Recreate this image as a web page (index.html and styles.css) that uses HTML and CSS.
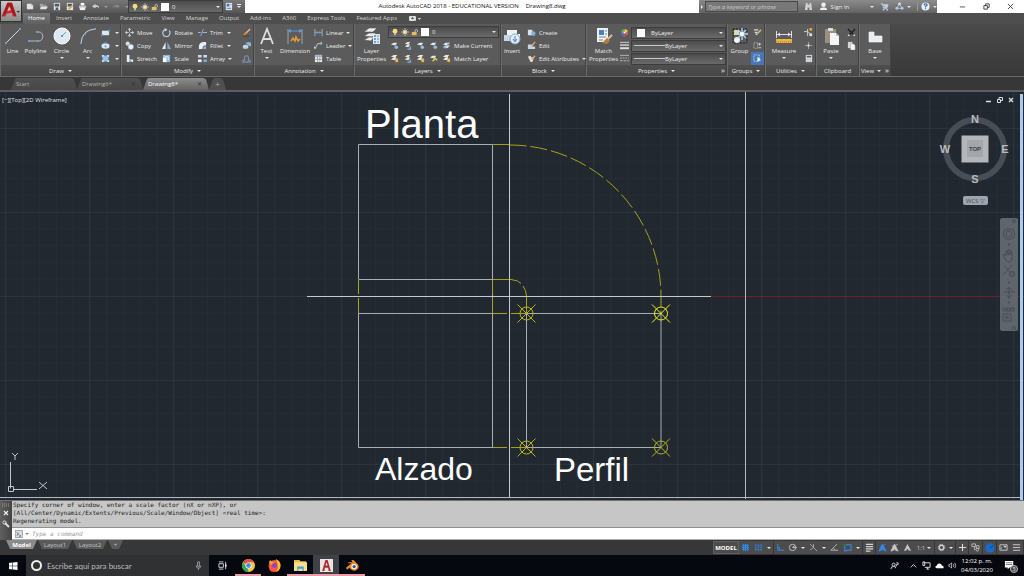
FILE: index.html
```html
<!DOCTYPE html>
<html lang="en">
<head>
<meta charset="utf-8">
<title>Autodesk AutoCAD 2018 - Drawing8.dwg</title>
<link rel="stylesheet" href="styles.css">
</head>
<body>
<svg class="sprite" aria-hidden="true">
  <defs>
    <symbol id="new" viewBox="0 0 10 10"><path d="M1 2h5l2 2v4H1z" fill="#e4e4e4"/><path d="M6 2v2h2" fill="#aaa"/></symbol>
    <symbol id="open" viewBox="0 0 10 10"><path d="M1 2h3l1 1h3v2H1z" fill="#9ba4aa"/><path d="M2 5h8L8 8H1z" fill="#e2e2e2"/></symbol>
    <symbol id="save" viewBox="0 0 10 10"><path d="M2 1h7v8H2z" fill="#dfe5e9"/><path d="M3 2h5v3H3zM4 6h3v3H4z" fill="#4c5963"/></symbol>
    <symbol id="saveas" viewBox="0 0 10 10"><path d="M2 1h7v8H2z" fill="#dfe5e9"/><path d="M3 2h5v3H3z" fill="#4c5963"/><path d="M4 8l4-4" stroke="#e29b36" stroke-width="2"/></symbol>
    <symbol id="print" viewBox="0 0 10 10"><path d="M3 1h4v3H3z" fill="#fff"/><path d="M1 4h8v3H1z" fill="#b9bdc0"/><path d="M2 6h6v3H2z" fill="#f2f2f2"/></symbol>
    <symbol id="undo" viewBox="0 0 10 10"><path d="M5 2L1 5l4 2V6c2-1 3 0 4 1 0-3-2-4-4-3z" fill="#c6d0da"/></symbol>
    <symbol id="redo" viewBox="0 0 10 10"><path d="M5 2l4 3-4 2V6C3 5 2 6 1 7c0-3 2-4 4-3z" fill="#858585"/></symbol>
    <symbol id="bulb" viewBox="0 0 10 10"><circle cx="5" cy="4" r="3" fill="#f8dc7a"/><path d="M4 6h2v3H4z" fill="#d8d0ba"/></symbol>
    <symbol id="sun" viewBox="0 0 10 10"><path d="M5 0v10M0 5h10M2 2l6 6M8 2L2 8" stroke="#e2cfa6"/><circle cx="5" cy="5" r="2.3" fill="#f7e4b0"/></symbol>
    <symbol id="lock" viewBox="0 0 10 10"><path d="M5 5V3q2-3 3 0v2" fill="none" stroke="#ddd"/><path d="M1 5h6v4H1z" fill="#e5bd62"/></symbol>
    <symbol id="sheet" viewBox="0 0 10 10"><path d="M2 1h7v8H2z" fill="#d9e8f4"/><path d="M3 2h3v3H3z" fill="#3c78b4"/><path d="M3 7h5M7 3h1" stroke="#607080"/></symbol>
    <symbol id="binoc" viewBox="0 0 10 10"><path d="M2 1h2v2h2V1h2l1 8H6V6H4v3H1z" fill="#cfd3d6"/></symbol>
    <symbol id="user" viewBox="0 0 10 10"><circle cx="5" cy="3" r="2.5" fill="#eee"/><path d="M1 9q0-3 3-3h2q3 0 3 3z" fill="#eee"/></symbol>
    <symbol id="cart" viewBox="0 0 10 10"><path d="M1 2h2l1 5h4M3 3h6L8 6H4" fill="#bcd0e4" stroke="#bcd0e4"/><circle cx="4" cy="8.5" r="1" fill="#bcd0e4"/><circle cx="8" cy="8.5" r="1" fill="#bcd0e4"/></symbol>
    <symbol id="a360" viewBox="0 0 10 10"><path d="M5 2L2 7h6z" fill="none" stroke="#b2cce8"/><circle cx="5" cy="2" r="1.5" fill="#d6e5f5"/><circle cx="2" cy="7" r="1.5" fill="#b2cce8"/><circle cx="8" cy="7" r="1.5" fill="#b2cce8"/></symbol>
    <symbol id="help" viewBox="0 0 10 10"><circle cx="5" cy="5" r="4.5" fill="#e8f0f8"/><path d="M3.5 4q0-2 1.700-2t1.500 1.500L5 5v1M5 7v1" fill="none" stroke="#2f68ad" stroke-width="1.300"/></symbol>

    <symbol id="line" viewBox="0 0 18 18"><path d="M2 16L16 2" stroke="#d5dadd"/><path d="M1 15h2v2H1zM15 1h2v2h-2z" fill="#6f9cd0"/></symbol>
    <symbol id="poly" viewBox="0 0 18 18"><path d="M2 14h10c5 0 5-9 0-9h-2" fill="none" stroke="#a9bccf"/><path d="M1 13h2v2H1zM10 13h2v2h-2zM9 4h2v2H9z" fill="#6f9cd0"/></symbol>
    <symbol id="circle" viewBox="0 0 18 18"><circle cx="9" cy="9" r="8" fill="#dce8f2" stroke="#fff"/><path d="M9 9l4-4" stroke="#6b9acb"/><circle cx="9" cy="9" r="1" fill="#4e83bf"/></symbol>
    <symbol id="arc" viewBox="0 0 18 18"><path d="M2 16Q3 3 16 2" fill="none" stroke="#c8d2da"/><path d="M1 15h2v2H1zM5 6h2v2H5zM15 1h2v2h-2z" fill="#6f9cd0"/></symbol>
    <symbol id="rect" viewBox="0 0 10 10"><path d="M1 3h8v5H1z" fill="#dbe9f5"/><path d="M0 7h2v2H0zM8 2h2v2H8z" fill="#5c95d4"/></symbol>
    <symbol id="ellipse" viewBox="0 0 10 10"><ellipse cx="5" cy="5.500" rx="4.500" ry="3" fill="#dbe9f5"/><path d="M4 5h2v2H4zM4 1h2v2H4z" fill="#5c95d4"/></symbol>
    <symbol id="hatch" viewBox="0 0 10 10"><path d="M2 2h6v6H2z" fill="#9dc3e8" stroke="#6ca0d8"/><path d="M1 1h2v2H1zM7 1h2v2H7zM1 7h2v2H1zM7 7h2v2H7z" fill="#d8e8f8"/></symbol>
    <symbol id="move" viewBox="0 0 10 10"><path d="M5 0l2 2H3zM5 10L3 8h4zM0 5l2-2v4zM10 5L8 7V3z" fill="#d9e2ea"/><path d="M5 2v2M5 6v2M2 5h2M6 5h2" stroke="#d9e2ea"/></symbol>
    <symbol id="copy" viewBox="0 0 10 10"><circle cx="3" cy="3" r="2.400" fill="#cfdbe5"/><circle cx="6.500" cy="6.500" r="3" fill="#e9f1f8" stroke="#87aaca" stroke-width=".5"/></symbol>
    <symbol id="stretch" viewBox="0 0 10 10"><path d="M2 1h3v5h4v3H2z" fill="#e7eef4"/><path d="M5 6l3 3H5z" fill="#6c9fcf"/></symbol>
    <symbol id="rotate" viewBox="0 0 10 10"><path d="M3 2a4 4 0 1 0 5 1" fill="none" stroke="#b9cfe4" stroke-width="1.300"/><path d="M3 0l3 2-3 2z" fill="#d9e2ea"/></symbol>
    <symbol id="mirror" viewBox="0 0 10 10"><path d="M4 1v8H0z" fill="#dfe7ee"/><path d="M6 1v8h4z" fill="#7ea9d2"/></symbol>
    <symbol id="scale" viewBox="0 0 10 10"><path d="M1 1h8v8H1z" fill="#8db6dc"/><path d="M1 4h4v5H1z" fill="#fff"/><path d="M3 3h4v4" fill="none" stroke="#e8f1f9"/></symbol>
    <symbol id="trim" viewBox="0 0 10 10"><path d="M0 5h3M5 5h5" stroke="#a8c4df"/><path d="M3 9l3-8" stroke="#86b3df"/></symbol>
    <symbol id="fillet" viewBox="0 0 10 10"><path d="M1 9V6q0-5 6-5h2v4H7q-2 0-2 4z" fill="#e8eff5"/><path d="M6 6h3v3H6z" fill="#86b3df"/></symbol>
    <symbol id="array" viewBox="0 0 10 10"><path d="M0 1h4v3H0zM6 1h4v3H6z" fill="#c9dff3"/><path d="M0 6h4v3H0z" fill="#ecf4fb"/><path d="M6 6h4v3H6z" fill="#76a9dc"/></symbol>
    <symbol id="erase" viewBox="0 0 10 10"><path d="M9 1L4 6" stroke="#f1c073" stroke-width="1.500"/><path d="M5 5L2 8" stroke="#d88a31" stroke-width="2"/><path d="M1 9h7" stroke="#3c3c3c"/></symbol>
    <symbol id="explode" viewBox="0 0 10 10"><path d="M1 5l3-1 3 1v3L4 9 1 8z" fill="#bfd3e6"/><path d="M4 2l3-1 3 1v4L7 5z" fill="#8fb4d7"/></symbol>
    <symbol id="offset" viewBox="0 0 10 10"><path d="M1 9V7h2q-1-5 2-5t2 5h2v2z" fill="none" stroke="#7794b0" stroke-width="1.200"/></symbol>
    <symbol id="text" viewBox="0 0 18 18"><path d="M3 17L9 2l6 15M5 12h8" fill="none" stroke="#dedede" stroke-width="1.800"/></symbol>
    <symbol id="dim" viewBox="0 0 18 18"><path d="M2 2v15M16 2v15" stroke="#9aa7b3"/><path d="M2 4h14" stroke="#5b9be0"/><path d="M2 4l3-2v4zM16 4l-3-2v4z" fill="#5b9be0"/><path d="M5 14l2-3 2 3 1-4 2 4 2-2" fill="none" stroke="#e99b36" stroke-width="1.500"/></symbol>
    <symbol id="linear" viewBox="0 0 10 10"><path d="M1 1v8M9 1v8" stroke="#a9b3bc"/><path d="M1 5h8M2 5l2-1v2zM8 5L6 4v2z" stroke="#6ca0d8"/></symbol>
    <symbol id="leader" viewBox="0 0 10 10"><path d="M1 9l3-6h5" fill="none" stroke="#cfd5da"/><path d="M0 9V6l2 1z" fill="#cfd5da"/><path d="M7 1h2v3H7z" fill="#8cb4dc"/></symbol>
    <symbol id="table" viewBox="0 0 10 10"><path d="M1 1h8v8H1z" fill="#f0f0f0"/><path d="M1 3h8M1 6h8M4 3v6M6.500 3v6" stroke="#777" stroke-width=".7"/><path d="M1 1h8v1H1z" fill="#7fb0de"/></symbol>
    <symbol id="layers" viewBox="0 0 18 18"><path d="M1 5l5-4h8l-4 4zM1 9l5-3h7l-4 4zM1 13l5-3h5l-3 4z" fill="#eeeeea" stroke="#555" stroke-width=".6"/><path d="M10 7h7v10h-7z" fill="#dce9f4"/><path d="M11 9h2M11 12h2M11 15h2" stroke="#4d88c5" stroke-width="1.500"/><path d="M14 9h2M14 12h2M14 15h2" stroke="#808890"/></symbol>
    <symbol id="l1" viewBox="0 0 10 10"><path d="M1 4l3-2h4L6 5z" fill="#e6e6e3"/><circle cx="7" cy="7" r="2" fill="#8dbbe8"/></symbol>
    <symbol id="l2" viewBox="0 0 10 10"><path d="M2 3l3-2h3L6 4zM2 6l3-2h3L6 7z" fill="#e6e6e3"/><path d="M5 9h4M8 6v3" stroke="#83b4e8" stroke-width="1.300"/></symbol>
    <symbol id="l3" viewBox="0 0 10 10"><path d="M1 3l3-2h4L6 4zM1 6l3-2h3L6 7z" fill="#eceae4"/><path d="M6 5h3v4H6z" fill="#eeb64b"/></symbol>
    <symbol id="l4" viewBox="0 0 10 10"><path d="M1 4l3-2h4L6 5z" fill="#e6e6e3"/><path d="M4 8l3-3 2 2" fill="none" stroke="#e4d353" stroke-width="1.500"/></symbol>
    <symbol id="l5" viewBox="0 0 10 10"><path d="M1 4l3-2h5L6 5zM1 7l3-2h5L6 8z" fill="#d9e8f5"/><path d="M3 9l5-8" stroke="#75a6da"/></symbol>
    <symbol id="insert" viewBox="0 0 18 18"><path d="M4 3h10v4h3v5H4z" fill="#f0f3f5"/><path d="M1 8h7v6H1z" fill="#c8d6e3"/><circle cx="12" cy="12" r="5" fill="#e4eef7" stroke="#83a9cf"/><path d="M12 9v5M10 12l2 3 2-3" stroke="#4b84bd" fill="none"/></symbol>
    <symbol id="create" viewBox="0 0 10 10"><path d="M1 2h5v3h3v3H1z" fill="#d6e2ed"/><circle cx="7" cy="6" r="2.300" fill="#86b1db"/></symbol>
    <symbol id="edit" viewBox="0 0 10 10"><path d="M1 4h5v2h3v3H1z" fill="#c4d5e5"/><path d="M5 6l4-5" stroke="#eda743" stroke-width="1.600"/></symbol>
    <symbol id="attr" viewBox="0 0 10 10"><path d="M1 3l3-1 1 2 3-1-2 6H4z" fill="#dce0e3"/><path d="M5 6l4-4" stroke="#eda743" stroke-width="1.500"/></symbol>
    <symbol id="match" viewBox="0 0 18 18"><path d="M2 1h11v14H2z" fill="#edf1f4"/><path d="M4 3h5v5H4z" fill="#4a82bf"/><path d="M10 4h2M10 7h2M4 10h7M4 13h4" stroke="#78838c"/><path d="M17 8l-5 5" stroke="#d4bfa3" stroke-width="2"/><path d="M12 11l3 3-3 3-5-1z" fill="#b9783e"/></symbol>
    <symbol id="wheel" viewBox="0 0 10 10"><path d="M5 5V1a4 4 0 0 1 4 3z" fill="#f1c83f"/><path d="M5 5l4-1a4 4 0 0 1-2 4z" fill="#e26a35"/><path d="M5 5l2 4a4 4 0 0 1-5-1z" fill="#b04a8f"/><path d="M5 5L2 8a4 4 0 0 1-1-4z" fill="#4c79c9"/><path d="M5 5L1 4a4 4 0 0 1 4-3z" fill="#5fae57"/><circle cx="5" cy="5" r="1.200" fill="#fff"/></symbol>
    <symbol id="weight" viewBox="0 0 10 10"><path d="M0 1.500h10" stroke="#ddd"/><path d="M0 4.500h10" stroke="#ddd" stroke-width="1.500"/><path d="M0 8h10" stroke="#ddd" stroke-width="2.200"/></symbol>
    <symbol id="ltype" viewBox="0 0 10 10"><path d="M0 1.500h10" stroke="#bbb"/><path d="M0 4.500h10" stroke="#bbb" stroke-dasharray="2 1"/><path d="M0 7.500h10" stroke="#bbb" stroke-dasharray="3 1"/></symbol>
    <symbol id="group" viewBox="0 0 18 18"><path d="M2 2h14v14H2z" fill="none" stroke="#222" stroke-dasharray="2 1"/><path d="M3 3h5v5H3z" fill="#e4d99c"/><circle cx="6" cy="13" r="3" fill="#f2f2f2"/><path d="M11 1v12M5 7h12M7 3l8 8M15 3l-8 8" stroke="#bbdcf6" stroke-width="1.300"/><circle cx="11" cy="7" r="2" fill="#fff"/></symbol>
    <symbol id="g1" viewBox="0 0 10 10"><path d="M1 2h5M2 5h3M3 7h2" stroke="#d9d9d9" stroke-width="1.500"/><path d="M5 6l4-4" stroke="#e0c15b" stroke-width="1.500"/></symbol>
    <symbol id="g2" viewBox="0 0 10 10"><path d="M1 2h4v6H1z" fill="none" stroke="#ccc" stroke-dasharray="1 1"/><path d="M7 2v3M6 3.500h3M6 7.500h3" stroke="#ddd"/></symbol>
    <symbol id="g3" viewBox="0 0 10 10"><path d="M1 1h6v7H1z" fill="none" stroke="#e4eefb" stroke-dasharray="1 1"/><path d="M5 3v6l2-2h2z" fill="#fff"/></symbol>
    <symbol id="measure" viewBox="0 0 18 18"><path d="M1.500 4v7M16.500 4v7M2 7.500h14" stroke="#d8dfe5"/><path d="M2 7.500l3-2v4zM16 7.500l-3-2v4z" fill="#d8dfe5"/><path d="M1 12h16v4H1z" fill="#ecb33f"/><path d="M1 15h16" stroke="#b57919" stroke-dasharray="1 1"/></symbol>
    <symbol id="u1" viewBox="0 0 10 10"><path d="M0 4h4M4 1v8M4 4l5 4" stroke="#ccd6de"/><path d="M6 0h3v3H6z" fill="#eb9e35"/><path d="M6 6h3v3H6z" fill="#ddd"/></symbol>
    <symbol id="u2" viewBox="0 0 10 10"><path d="M5 1v8M1 5h8" stroke="#9aaaba"/><path d="M4 4h2v2H4z" fill="#e8f0f6"/></symbol>
    <symbol id="calc" viewBox="0 0 10 10"><path d="M2 1h7v8H2z" fill="#e1e4e6"/><path d="M3 2h5v2H3z" fill="#56616b"/><path d="M3 6h5M3 8h5" stroke="#8b949b" stroke-dasharray="1 1"/></symbol>
    <symbol id="paste" viewBox="0 0 18 18"><path d="M3 2h11v14H3z" fill="#9c8f80"/><path d="M6 1h5v3H6z" fill="#ddd"/><path d="M8 6h6l3 3v9H8z" fill="#f4f4f4"/><path d="M14 6v3h3" fill="#bbb"/></symbol>
    <symbol id="cut" viewBox="0 0 10 10"><path d="M1 1l7 7M9 1L2 8" stroke="#222" stroke-width="1.600"/><path d="M1 8h2M7 8h2" stroke="#ddd" stroke-width="1.500"/></symbol>
    <symbol id="clip" viewBox="0 0 10 10"><path d="M1 1h5v7H1z" fill="#d6d6d6"/><path d="M4 3h3l2 2v5H4z" fill="#f5f5f5" stroke="#888" stroke-width=".4"/></symbol>
    <symbol id="base" viewBox="0 0 18 18"><path d="M3 5h5v4h8v6H3z" fill="#e9edf0" stroke="#fff" stroke-width=".6"/></symbol>

    <symbol id="grid" viewBox="0 0 10 10"><path d="M3 1v8M5 1v8M7 1v8M1 3h8M1 5h8M1 7h8" stroke="#2f8cf0" stroke-width="1.100"/></symbol>
    <symbol id="snap" viewBox="0 0 10 10"><path d="M1 2.500h8M1 5h8M1 7.500h8" stroke="#2f7fd8" stroke-width="1.500" stroke-dasharray="2 1"/></symbol>
    <symbol id="ortho" viewBox="0 0 10 10"><path d="M2 1v7h7M2 5h2v3" fill="none" stroke="#2f8cf0"/></symbol>
    <symbol id="polar" viewBox="0 0 10 10"><circle cx="5" cy="5" r="3.500" fill="none" stroke="#c5c5c5"/><path d="M5 5h5M5 5l3-3" stroke="#c5c5c5"/></symbol>
    <symbol id="iso" viewBox="0 0 10 10"><path d="M1 1l8 8M5 5V1M5 5L1 8" stroke="#aaa"/></symbol>
    <symbol id="track" viewBox="0 0 10 10"><path d="M8 1L1 8h8M4 6l2 2" fill="none" stroke="#bbb"/></symbol>
    <symbol id="osnap" viewBox="0 0 10 10"><path d="M3 2h6v6H6L2 9V3" fill="none" stroke="#2f8cf0" stroke-width="1.200"/><circle cx="2" cy="2" r="1.800" fill="#20803a"/></symbol>
    <symbol id="lwt" viewBox="0 0 10 10"><path d="M1 1.500h8M1 4h8M1 6.500h8M1 9h5" stroke="#d2d2d2" stroke-width="1.300"/></symbol>
    <symbol id="anno" viewBox="0 0 10 10"><path d="M5 1L1 9l3-1 1-2 1 2 3 1z" fill="currentColor"/></symbol>
    <symbol id="annox" viewBox="0 0 10 10"><path d="M5 1L1 9l3-1 1-2 1 2 3 1zM2 3l4 3M9 1L5 4" fill="currentColor" stroke="currentColor" stroke-width=".8"/></symbol>
    <symbol id="gear" viewBox="0 0 10 10"><circle cx="5" cy="5" r="2.500" fill="none" stroke="#ccc" stroke-width="1.500"/><circle cx="5" cy="5" r="3.600" fill="none" stroke="#ccc" stroke-dasharray="1.400 1.400"/></symbol>
    <symbol id="plus" viewBox="0 0 10 10"><path d="M5 1v8M1 5h8" stroke="#ddd" stroke-width="1.200"/></symbol>
    <symbol id="isolate" viewBox="0 0 10 10"><path d="M1 1h4v3H1zM4 4v4M6 3h3v3H6z" fill="none" stroke="#bbb"/><circle cx="7" cy="7.500" r="1.500" fill="none" stroke="#bbb"/></symbol>
    <symbol id="perf" viewBox="0 0 10 10"><circle cx="5" cy="5" r="4.700" fill="#176bcb"/><path d="M5 5l3-2" stroke="#0b3d7d"/></symbol>
    <symbol id="clean" viewBox="0 0 10 10"><path d="M1 2h8v6H1z" fill="none" stroke="#ccc"/><path d="M5 3h3v2H6zM2 7V5h2z" fill="#ccc"/></symbol>
    <symbol id="burger" viewBox="0 0 10 10"><path d="M1 2h8M1 5h8M1 8h8" stroke="#c5c5c5" stroke-width="1.200"/></symbol>

    <symbol id="windows" viewBox="0 0 10 10"><path d="M1 2l3.500-.5v3.300H1zM5 1.400L9.500 1v3.800H5zM1 5.300h3.500v3.300L1 8zM5 5.300h4.500V9L5 8.600z" fill="#fff"/></symbol>
    <symbol id="mic" viewBox="0 0 10 10"><path d="M4 1h2v5H4zM2.500 5q0 3 2.500 3t2.500-3M5 8v2" fill="none" stroke="#bbb" stroke-width=".8"/></symbol>
    <symbol id="taskview" viewBox="0 0 10 10"><path d="M1 3h5v4H1zM1 1h5M1 9h5M8.500 1v8" fill="none" stroke="#ddd"/><path d="M8 4h1.500v2H8z" fill="#fff"/></symbol>
    <symbol id="chrome" viewBox="0 0 12 12"><circle cx="6" cy="6" r="6" fill="#f6c944"/><path d="M6 6L.8 3A6 6 0 0 1 11.200 3H6z" fill="#de5145"/><path d="M.8 3l4.200 5L6 12A6 6 0 0 1 .8 3z" fill="#2fa35a"/><circle cx="6" cy="6" r="2.800" fill="#fff"/><circle cx="6" cy="6" r="2.200" fill="#4a8af0"/></symbol>
    <symbol id="firefox" viewBox="0 0 12 12"><circle cx="6" cy="6.500" r="5.500" fill="#ff5a36"/><path d="M7 0q5 2 4.500 6.500Q11 11 7 12q3-3 2-6Q9 3 7 0z" fill="#ffc42c"/><path d="M1 4q0-2 1-3l2 2h2L4 6z" fill="#ff9a2c"/><path d="M1 8q2 4 6 4-5 1-6-4z" fill="#f0308a"/><circle cx="6" cy="6" r="2.300" fill="#8046d6"/></symbol>
    <symbol id="folder" viewBox="0 0 12 12"><path d="M0 1h5l1 1h5v9H0z" fill="#e9b84a"/><path d="M0 3h12v8H0z" fill="#fbe08a"/><path d="M3 11V7h6v4H8V9H4v2z" fill="#3c9fe0"/></symbol>
    <symbol id="acad" viewBox="0 0 12 12"><path d="M0 0h12v12H0z" fill="#eee4de"/><path d="M2 11L5 1h2l3 10H8L7.500 8h-3L4 11z" fill="#a92a2d"/><path d="M5 6h2L6 3z" fill="#eee4de"/></symbol>
    <symbol id="blender" viewBox="0 0 12 12"><path d="M0 8l5-4H2V3h4L5 1h2l4 4q2 3-1 5-3 2-6-1L3 8 1 10z" fill="#ea8b24"/><circle cx="7.500" cy="7" r="2.500" fill="#fff"/><circle cx="7.500" cy="7" r="1.500" fill="#235b94"/></symbol>
    <symbol id="people" viewBox="0 0 10 10"><circle cx="4" cy="4" r="1.700" fill="none" stroke="#ddd"/><path d="M1 9q0-3 3-3t2 2M7 2h2v2H7v2" fill="none" stroke="#ddd"/></symbol>
    <symbol id="chev" viewBox="0 0 10 10"><path d="M2 7l3-3 3 3" fill="none" stroke="#eee"/></symbol>
    <symbol id="net" viewBox="0 0 10 10"><path d="M2 2h7v5H3M5 9h3M6 7v2M1 1v4h2V1z" fill="none" stroke="#e5e5e5"/></symbol>
    <symbol id="cloud" viewBox="0 0 10 10"><path d="M2 8q-2 0-1.500-2L2 5q1-3 4-2 1 0 1.500 2Q10 5 9.500 8z" fill="#fff"/></symbol>
    <symbol id="volume" viewBox="0 0 10 10"><path d="M1 4h1l2-2v6L2 6H1zM6 3.500q1 1.500 0 3M7.500 2q2 3 0 6" fill="none" stroke="#e5e5e5" stroke-width=".8"/></symbol>
    <symbol id="marker" viewBox="-10 -10 20 20"><circle r="6.500" fill="none" stroke="currentColor"/><path d="M-9-9L9 9M9-9L-9 9" stroke="currentColor"/></symbol>
  </defs>
</svg>

<div class="app">
  <header class="titlebar">
    <button class="app-menu" aria-label="Application menu">
      <svg class="app-logo" viewBox="0 0 22 20"><path d="M1 16L7 1h5l5 15h-4l-1-4-6 1-1 3z" fill="#cf2a2d"/><path d="M7 1l5 0 5 15-3-1L9 4 5 13l-4 3z" fill="#a41a1e"/><path d="M7 10l2-5 2 4z" fill="#c8c8c8"/><path d="M17 10h4l-2 2z" fill="#333"/></svg>
    </button>
    <div class="quick">
      <button aria-label="New"><svg><use href="#new"/></svg></button>
      <button aria-label="Open"><svg><use href="#open"/></svg></button>
      <button aria-label="Save"><svg><use href="#save"/></svg></button>
      <button aria-label="Save as"><svg><use href="#saveas"/></svg></button>
      <button aria-label="Plot"><svg><use href="#print"/></svg></button>
      <button aria-label="Undo"><svg><use href="#undo"/></svg></button><i class="caret dim"></i>
      <button aria-label="Redo"><svg><use href="#redo"/></svg></button><i class="caret dim"></i>
    </div>
    <div class="combo quick-layer">
      <svg><use href="#bulb"/></svg><svg><use href="#sun"/></svg><svg><use href="#lock"/></svg><i class="swatch"></i>
      <select aria-label="Current layer"><option>0</option></select><i class="caret"></i>
    </div>
    <div class="quick-end">
      <button aria-label="Sheet set"><svg><use href="#sheet"/></svg></button>
      <button class="more" aria-label="Customize toolbar"><i class="caret"></i></button>
    </div>
    <div class="title"><span>Autodesk AutoCAD 2018 - EDUCATIONAL VERSION</span><span>Drawing8.dwg</span></div>
    <div class="info">
      <button class="info-arrow" aria-label="Collapse search"><i class="caret right"></i></button>
      <input class="info-search" type="text" placeholder="Type a keyword or phrase" aria-label="Search help">
      <button aria-label="Search"><svg><use href="#binoc"/></svg></button>
      <button class="signin"><svg><use href="#user"/></svg><span>Sign In</span><i class="caret"></i></button>
      <button aria-label="Store"><svg><use href="#cart"/></svg></button>
      <button aria-label="A360"><svg><use href="#a360"/></svg><i class="caret"></i></button>
      <button class="help" aria-label="Help"><svg><use href="#help"/></svg><i class="caret"></i></button>
    </div>
    <div class="window-buttons">
      <button aria-label="Minimize"><svg viewBox="0 0 8 8"><path d="M1 4.500h6" stroke="#444"/></svg></button>
      <button aria-label="Restore"><svg viewBox="0 0 8 8"><path d="M1 3h4v4H1zM3 3V1h4v4H5" fill="none" stroke="#333"/></svg></button>
      <button aria-label="Close"><svg viewBox="0 0 8 8"><path d="M1 1l6 6M7 1L1 7" stroke="#444"/></svg></button>
    </div>
  </header>

  <nav class="menu">
    <button class="active">Home</button><button>Insert</button><button>Annotate</button><button>Parametric</button><button>View</button><button>Manage</button><button>Output</button><button>Add-ins</button><button>A360</button><button>Express Tools</button><button>Featured Apps</button>
    <button class="menu-cycle" aria-label="Minimize ribbon"><svg viewBox="0 0 14 6"><rect x="1" width="7" height="5" rx="1" fill="#ddd"/><path d="M3 3h3L4.500 1z" fill="#444"/><path d="M10 2h3l-1.500 2z" fill="#ddd"/></svg></button>
  </nav>

  <main class="ribbon">
    <section class="panel p-draw">
      <div class="panel-body">
        <button class="big"><svg><use href="#line"/></svg>Line</button>
        <button class="big"><svg><use href="#poly"/></svg>Polyline</button>
        <button class="big wide"><svg><use href="#circle"/></svg>Circle<i class="caret"></i></button>
        <button class="big"><svg><use href="#arc"/></svg>Arc<i class="caret"></i></button>
        <div class="col">
          <button class="tool" aria-label="Rectangle"><svg><use href="#rect"/></svg><i class="caret"></i></button>
          <button class="tool" aria-label="Ellipse"><svg><use href="#ellipse"/></svg><i class="caret"></i></button>
          <button class="tool" aria-label="Hatch"><svg><use href="#hatch"/></svg><i class="caret"></i></button>
        </div>
      </div>
      <button class="panel-title">Draw<i class="caret"></i></button>
    </section>

    <section class="panel p-modify">
      <div class="panel-body">
        <div class="col c1">
          <button class="tool"><svg><use href="#move"/></svg>Move</button>
          <button class="tool"><svg><use href="#copy"/></svg>Copy</button>
          <button class="tool"><svg><use href="#stretch"/></svg>Stretch</button>
        </div>
        <div class="col c2">
          <button class="tool"><svg><use href="#rotate"/></svg>Rotate</button>
          <button class="tool"><svg><use href="#mirror"/></svg>Mirror</button>
          <button class="tool"><svg><use href="#scale"/></svg>Scale</button>
        </div>
        <div class="col c3">
          <button class="tool"><svg><use href="#trim"/></svg>Trim<i class="caret end"></i></button>
          <button class="tool"><svg><use href="#fillet"/></svg>Fillet<i class="caret end"></i></button>
          <button class="tool"><svg><use href="#array"/></svg>Array<i class="caret end"></i></button>
        </div>
        <div class="col">
          <button class="tool" aria-label="Erase"><svg><use href="#erase"/></svg></button>
          <button class="tool" aria-label="Explode"><svg><use href="#explode"/></svg></button>
          <button class="tool" aria-label="Offset"><svg><use href="#offset"/></svg></button>
        </div>
      </div>
      <button class="panel-title">Modify<i class="caret"></i></button>
    </section>

    <section class="panel p-annotation">
      <div class="panel-body">
        <button class="big"><svg><use href="#text"/></svg>Text<i class="caret"></i></button>
        <button class="big dimension"><svg><use href="#dim"/></svg>Dimension</button>
        <div class="col">
          <button class="tool"><svg><use href="#linear"/></svg>Linear<i class="caret end"></i></button>
          <button class="tool"><svg><use href="#leader"/></svg>Leader<i class="caret end"></i></button>
          <button class="tool"><svg><use href="#table"/></svg>Table</button>
        </div>
      </div>
      <button class="panel-title">Annotation<i class="caret"></i></button>
    </section>

    <section class="panel p-layers">
      <div class="panel-body">
        <button class="big props"><svg><use href="#layers"/></svg>Layer<br>Properties</button>
        <div class="col grow">
          <div class="combo">
            <svg><use href="#bulb"/></svg><svg><use href="#sun"/></svg><svg><use href="#lock"/></svg><i class="swatch"></i>
            <select aria-label="Layer"><option>0</option></select><i class="caret"></i>
          </div>
          <div class="tool-row">
            <button class="tool" aria-label="Layer off"><svg><use href="#l1"/></svg></button>
            <button class="tool" aria-label="Isolate layer"><svg><use href="#l2"/></svg></button>
            <button class="tool" aria-label="Freeze layer"><svg><use href="#l1"/></svg></button>
            <button class="tool" aria-label="Lock layer"><svg><use href="#l1"/></svg></button>
            <button class="tool"><svg><use href="#l5"/></svg>Make Current</button>
          </div>
          <div class="tool-row">
            <button class="tool" aria-label="All layers on"><svg><use href="#l3"/></svg></button>
            <button class="tool" aria-label="Unisolate layer"><svg><use href="#l2"/></svg></button>
            <button class="tool" aria-label="Thaw all layers"><svg><use href="#l3"/></svg></button>
            <button class="tool" aria-label="Unlock layer"><svg><use href="#l4"/></svg></button>
            <button class="tool"><svg><use href="#l3"/></svg>Match Layer</button>
          </div>
        </div>
      </div>
      <button class="panel-title">Layers<i class="caret"></i></button>
    </section>

    <section class="panel p-block">
      <div class="panel-body">
        <button class="big"><svg><use href="#insert"/></svg>Insert</button>
        <div class="col grow">
          <button class="tool"><svg><use href="#create"/></svg>Create</button>
          <button class="tool"><svg><use href="#edit"/></svg>Edit</button>
          <button class="tool"><svg><use href="#attr"/></svg>Edit Attributes<i class="caret end"></i></button>
        </div>
      </div>
      <button class="panel-title">Block<i class="caret"></i></button>
    </section>

    <section class="panel p-properties">
      <div class="panel-body">
        <button class="big props"><svg><use href="#match"/></svg>Match<br>Properties</button>
        <div class="col grow">
          <div class="prop"><svg><use href="#wheel"/></svg><div class="combo"><i class="swatch"></i><select aria-label="Color"><option>ByLayer</option></select><i class="caret"></i></div></div>
          <div class="prop"><svg><use href="#weight"/></svg><div class="combo"><i class="rule"></i><select aria-label="Lineweight"><option>ByLayer</option></select><i class="caret"></i></div></div>
          <div class="prop"><svg><use href="#ltype"/></svg><div class="combo"><i class="rule"></i><select aria-label="Linetype"><option>ByLayer</option></select><i class="caret"></i></div></div>
        </div>
      </div>
      <button class="panel-title">Properties<i class="caret"></i><span class="launch">»</span></button>
    </section>

    <section class="panel p-groups">
      <div class="panel-body">
        <button class="big"><svg><use href="#group"/></svg>Group</button>
        <div class="col">
          <button class="tool" aria-label="Ungroup"><svg><use href="#g1"/></svg></button>
          <button class="tool" aria-label="Group edit"><svg><use href="#g2"/></svg></button>
          <button class="tool on" aria-label="Group selection"><svg><use href="#g3"/></svg></button>
        </div>
      </div>
      <button class="panel-title">Groups<i class="caret"></i></button>
    </section>

    <section class="panel p-utilities">
      <div class="panel-body">
        <button class="big"><svg><use href="#measure"/></svg>Measure<i class="caret"></i></button>
        <div class="col">
          <button class="tool" aria-label="Quick select"><svg><use href="#u1"/></svg></button>
          <button class="tool" aria-label="Point"><svg><use href="#u2"/></svg></button>
          <button class="tool" aria-label="Calculator"><svg><use href="#calc"/></svg></button>
        </div>
      </div>
      <button class="panel-title">Utilities<i class="caret"></i></button>
    </section>

    <section class="panel p-clipboard">
      <div class="panel-body">
        <button class="big"><svg><use href="#paste"/></svg>Paste<i class="caret"></i></button>
        <div class="col">
          <button class="tool" aria-label="Cut"><svg><use href="#cut"/></svg></button>
          <button class="tool" aria-label="Copy clip"><svg><use href="#clip"/></svg></button>
        </div>
      </div>
      <div class="panel-title">Clipboard</div>
    </section>

    <section class="panel p-view">
      <div class="panel-body">
        <button class="big"><svg><use href="#base"/></svg>Base<i class="caret"></i></button>
      </div>
      <button class="panel-title">View<i class="caret"></i><span class="launch">»</span></button>
    </section>
  </main>

  <nav class="files">
    <button class="file">Start</button>
    <button class="file"><span>Drawing6*</span><span class="x">✕</span></button>
    <button class="file active"><span>Drawing8*</span><span class="x">✕</span></button>
    <button class="file add" aria-label="New drawing">+</button>
  </nav>

  <div class="viewport">
    <svg class="drawing" viewBox="0 92 1024 408" preserveAspectRatio="xMinYMin slice">
      <defs>
        <pattern id="minor" x="5.500" y="43.500" width="16.800" height="16.800" patternUnits="userSpaceOnUse"><path d="M.5 0v16.800M0 .5h16.800" stroke="#252c35"/></pattern>
        <pattern id="major" x="5" y="44" width="84" height="84" patternUnits="userSpaceOnUse"><path d="M.5 0v84M0 .5h84" stroke="#2b333e"/></pattern>
      </defs>
      <rect y="92" width="1024" height="408" fill="#212830"/>
      <rect y="92" width="1024" height="408" fill="url(#minor)"/>
      <rect y="92" width="1024" height="408" fill="url(#major)"/>
      <path d="M711 296.500h309" stroke="#6d2227"/>
      <g fill="none" stroke="#a9abae">
        <path d="M358.500 279V144.500H492.500V447.500M358.500 279.500H493M358.500 313.500H493M358.500 313V447.500H493M526.500 313.500H661M526.500 313V447.500H661V313"/>
      </g>
      <g fill="none" stroke="#a3a31a">
        <path d="M493 144.500h17M493 279.500h18"/>
        <path d="M509.500 145A151.500 151.500 0 0 1 661 296.500V313" stroke-dasharray="17 4"/>
        <path d="M511 279.500q8 1 10 4M523 286q3 4 3.500 10v17"/>
        <path d="M358.500 280v14M358.500 298v15M492.500 280v14M492.500 298v15M493 313.500h14M511 313.500h15M493 447.500h14M511 447.500h15"/>
      </g>
      <path d="M307 296.500h404M509.500 94v404" stroke="#c6c8c9"/>
      <path d="M745.500 92v407M0 497.500h1020" stroke="#b4b9bf"/>
      <g color="#b3b31c">
        <use href="#marker" x="516.500" y="303.500" width="20" height="20"/>
        <use href="#marker" x="516.500" y="437.500" width="20" height="20"/>
        <use href="#marker" x="651" y="437.500" width="20" height="20"/>
        <use href="#marker" x="651" y="303.500" width="20" height="20" color="#f0f01a"/>
      </g>
      <g class="drawing-text">
        <text x="365" y="138" font-size="40">Planta</text>
        <text x="375" y="480" font-size="32">Alzado</text>
        <text x="554" y="481" font-size="33">Perfil</text>
      </g>
      <path d="M10.500 462v26.500M8.500 486.500h5v5h-5zM13 489.500h24M39 482l8 7M47 482l-8 7M12 453l3 3 3-3M15 456v4" fill="none" stroke="#c3c6c9"/>
    </svg>
    <div class="viewport-label">[−][Top][2D Wireframe]</div>
    <div class="viewport-buttons">
      <button aria-label="Minimize viewport"><svg viewBox="0 0 6 6"><path d="M0 4.500h5" stroke="#ddd" stroke-width="1.500"/></svg></button>
      <button aria-label="Restore viewport"><svg viewBox="0 0 6 6"><path d="M.5 2.500h3v3h-3zM2 2V.5h3.500v3H4" fill="none" stroke="#ddd"/></svg></button>
      <button aria-label="Close viewport"><svg viewBox="0 0 6 6"><path d="M1 1l4 4M5 1L1 5" stroke="#ddd" stroke-width="1.300"/></svg></button>
    </div>
    <svg class="cube" viewBox="0 0 72 74">
      <circle cx="36" cy="37" r="29" fill="none" stroke="#474e56" stroke-width="6"/>
      <rect x="22.500" y="23.500" width="27" height="27" fill="#b4b6b9"/><rect x="28" y="28" width="16" height="17" fill="#a3a7ac"/>
      <text x="36" y="39" class="cube-face">TOP</text>
      <g class="cube-dir"><text x="36" y="11">N</text><text x="36" y="71">S</text><text x="6" y="41">W</text><text x="66" y="41">E</text></g>
    </svg>
    <button class="wcs">WCS <span>▽</span></button>
    <div class="navbar">
      <svg viewBox="0 0 18 113" fill="none" stroke="#454a51" stroke-width=".9"><circle cx="14" cy="3" r="1.500"/><rect x="3.500" y="11" width="11" height="10" rx="4"/><circle cx="9" cy="16" r="3"/><path d="M8 26h2l-1 1.500zM5 41l-2-4q2-1 3 1v-5q2-1 2 0v4-5q2-1 2 0v5l1-4q1 0 1 1v7l-2 3H8zM4 48l9 9M12 47l-9 10M8 64h2l-1 1.500zM4 74h11M9 69v12M6 72q3-4 6 0M6 77q3 4 6 0M8 84h2l-1 1.500zM3 90h3v3H3zM7 90h3v3H7zM11 90h3v3h-3zM3 96h8v7H3zM6 98v3l3-1.500z"/><circle cx="12" cy="56" r="2.500"/><circle cx="14" cy="110" r="1.500"/></svg>
    </div>
    <div class="edge"></div>
  </div>

  <section class="command">
    <div class="command-grip">
      <svg viewBox="0 0 12 40"><path d="M2 3h8M2 5h8" stroke="#999" stroke-dasharray="1 1"/><path d="M4 10l4 4M8 10l-4 4" stroke="#eee" stroke-width="1.200"/><path d="M5 22l4 4" stroke="#ddd" stroke-width="2"/><circle cx="4.500" cy="21.500" r="1.600" fill="none" stroke="#ddd"/></svg>
    </div>
    <div class="command-main">
      <pre class="history">Specify corner of window, enter a scale factor (nX or nXP), or
[All/Center/Dynamic/Extents/Previous/Scale/Window/Object] &lt;real time&gt;:
Regenerating model.</pre>
      <label class="prompt">
        <svg viewBox="0 0 14 8"><rect x=".5" y=".5" width="7" height="7" fill="#d6dbe0" stroke="#8a9299" stroke-width=".7"/><path d="M2 2.500L3.500 4 2 5.500M4 6h2" fill="none" stroke="#556"/><path d="M10 3h4l-2 2z" fill="#888"/></svg>
        <input type="text" placeholder="Type a command" aria-label="Command">
      </label>
    </div>
  </section>

  <footer class="status">
    <nav class="layouts">
      <button class="active">Model</button><button>Layout1</button><button>Layout2</button><button class="add" aria-label="New layout">+</button>
    </nav>
    <div class="status-tools">
      <button class="model">MODEL</button>
      <button aria-label="Grid"><svg><use href="#grid"/></svg></button><button aria-label="Snap"><svg><use href="#snap"/></svg></button><button class="drop" aria-label="Snap options"><i class="caret"></i></button>
      <button class="sep" aria-label="Ortho"><svg><use href="#ortho"/></svg></button><button aria-label="Polar"><svg><use href="#polar"/></svg></button><button class="drop" aria-label="Polar options"><i class="caret"></i></button>
      <button aria-label="Isodraft"><svg><use href="#iso"/></svg></button><button class="drop" aria-label="Isodraft options"><i class="caret"></i></button>
      <button aria-label="Tracking"><svg><use href="#track"/></svg></button><button aria-label="Object snap"><svg><use href="#osnap"/></svg></button><button class="drop" aria-label="Object snap options"><i class="caret"></i></button>
      <button class="sep" aria-label="Lineweight"><svg><use href="#lwt"/></svg></button>
      <button class="sep blue" aria-label="Annotation visibility"><svg><use href="#annox"/></svg></button><button aria-label="Auto scale"><svg><use href="#annox"/></svg></button><button aria-label="Annotation scale"><svg><use href="#anno"/></svg></button><button class="scale">1:1<i class="caret"></i></button>
      <button class="sep" aria-label="Workspace"><svg><use href="#gear"/></svg></button><button class="drop" aria-label="Workspace options"><i class="caret"></i></button>
      <button class="sep" aria-label="Annotation monitor"><svg><use href="#plus"/></svg></button>
      <button class="sep roomy" aria-label="Isolate objects"><svg><use href="#isolate"/></svg></button>
      <button class="sep roomy" aria-label="Graphics performance"><svg class="disc"><use href="#perf"/></svg></button>
      <button class="sep roomy" aria-label="Clean screen"><svg><use href="#clean"/></svg></button>
      <button aria-label="Customization"><svg><use href="#burger"/></svg></button>
    </div>
  </footer>

  <footer class="taskbar">
    <button class="start" aria-label="Start"><svg><use href="#windows"/></svg></button>
    <label class="search"><i class="cortana"></i><input type="text" placeholder="Escribe aquí para buscar" aria-label="Buscar"><svg><use href="#mic"/></svg></label>
    <button class="task" aria-label="Task view"><svg><use href="#taskview"/></svg></button>
    <button class="task running" aria-label="Chrome"><svg class="logo"><use href="#chrome"/></svg></button>
    <button class="task" aria-label="Firefox"><svg class="logo"><use href="#firefox"/></svg></button>
    <button class="task running" aria-label="Explorer"><svg class="logo"><use href="#folder"/></svg></button>
    <button class="task running current" aria-label="AutoCAD"><svg class="logo"><use href="#acad"/></svg></button>
    <button class="task running" aria-label="Blender"><svg class="logo"><use href="#blender"/></svg></button>
    <div class="tray">
      <button class="people" aria-label="People"><svg><use href="#people"/></svg></button>
      <button aria-label="Hidden icons"><svg><use href="#chev"/></svg></button>
      <button aria-label="Network"><svg><use href="#net"/></svg></button>
      <button aria-label="OneDrive"><svg><use href="#cloud"/></svg></button>
      <button aria-label="Volume"><svg><use href="#volume"/></svg></button>
      <div class="clock"><time>12:02 p. m.</time><time>04/03/2020</time></div>
      <button class="notify" aria-label="Notifications"><svg viewBox="0 0 13 13"><path d="M1 1h9v7H6l-2 2V8H1z" fill="#fff"/><path d="M2 3h7M2 5h7" stroke="#333" stroke-width=".7"/></svg><span class="badge">3</span></button>
    </div>
  </footer>
</div>
</body>
</html>
```
FILE: styles.css
```css
* { box-sizing: border-box; }

body {
  margin: 0;
  background: #373737;
  color: #ececec;
  font: 6px/8px "Open Sans", "Noto Sans", sans-serif;
}

button, input, select {
  margin: 0;
  padding: 0;
  border: 0;
  border-radius: 0;
  outline: 0;
  background: none;
  color: inherit;
  font: inherit;
}

button { white-space: nowrap; }
svg { display: block; flex: none; width: 9px; height: 9px; }
.sprite { position: absolute; width: 0; height: 0; }

.app {
  display: flex;
  flex-direction: column;
  height: 100vh;
  overflow: hidden;
}

.caret {
  flex: none;
  width: 0;
  height: 0;
  border: 2px solid transparent;
  border-top-color: #e6e6e6;
  border-bottom: 0;
}
.caret.right { border: 2px solid transparent; border-left-color: #eee; border-right: 0; }
.caret.dim { border-top-color: #a0a0a0; }
.caret.end { margin-left: auto; }

/* Title bar */
.titlebar {
  position: relative;
  display: flex;
  flex: none;
  height: 13px;
  background: #fff;
}
.titlebar button { display: flex; align-items: center; }
.app-menu {
  position: absolute;
  z-index: 2;
  top: 0;
  left: 0;
  width: 22px;
  height: 22px;
  border: 1px solid #333;
  background: linear-gradient(#c9c9c9, #8b8b8b);
}
.app-logo { width: 20px; height: 20px; }
.quick {
  display: flex;
  align-items: center;
  gap: 4px;
  width: 128px;
  padding-left: 26px;
  background: linear-gradient(#777, #565656);
}
.combo {
  display: flex;
  align-items: center;
  gap: 2px;
  height: 12px;
  padding: 0 2px;
  border: 1px solid #3c3c3c;
  background: linear-gradient(#4c4c4c, #6a6a6a);
}
.combo svg { width: 8px; height: 8px; }
.combo select {
  flex: 1;
  min-width: 0;
  padding-left: 1px;
  appearance: none;
}
.swatch { flex: none; width: 8px; height: 8px; background: #fff; }
.quick-layer { width: 95px; height: 13px; }
.quick-end {
  display: flex;
  align-items: center;
  gap: 4px;
  width: 22px;
  padding-left: 1px;
  background: linear-gradient(#777, #565656);
}
.more { padding: 1px 0; border-top: 1px solid #eee; }
.title {
  display: flex;
  flex: 1;
  justify-content: center;
  gap: 7px;
  color: #111;
  line-height: 13px;
}
.info {
  display: flex;
  align-items: center;
  gap: 6px;
  width: 238px;
  background: linear-gradient(#8b8b8b, #636363);
}
.info button { gap: 3px; }
.info-arrow { padding-left: 2px; }
.info-search {
  width: 100px;
  height: 11px;
  margin-left: -4px;
  padding-left: 2px;
  border: 1px solid #4a4a4a;
  background: #787878;
  font-style: italic;
}
.info-search::placeholder { color: #c8c8c8; opacity: 1; }
.signin { width: 60px; }
.signin .caret { margin-left: auto; }
.help { padding-left: 3px; border-left: 1px solid #999; }
.window-buttons {
  display: flex;
  justify-content: flex-end;
  width: 87px;
  padding-right: 2px;
}
.window-buttons button { width: 24px; justify-content: center; }
.window-buttons svg { width: 7px; height: 7px; }

/* Ribbon tabs */
.menu {
  display: flex;
  flex: none;
  gap: 1px;
  height: 11px;
  padding-left: 23px;
  background: #4e4e4e;
  color: #d4d4d4;
}
.menu button { padding: 0 5px; line-height: 11px; }
.menu .active { background: linear-gradient(#777, #606060); color: #fff; }
.menu-cycle { display: flex; align-items: center; }
.menu-cycle svg { width: 14px; height: 6px; }

/* Ribbon panels */
.ribbon {
  display: flex;
  flex: none;
  height: 53px;
  border-bottom: 1px solid #6a6a6a;
  background: linear-gradient(#4a4a4a, #383838);
}
.panel {
  display: flex;
  flex: none;
  flex-direction: column;
  border-right: 1px solid #444;
  border-left: 1px solid #6b6b6b;
  background: #5b5b5b;
}
.panel-body { display: flex; flex: 1; padding-top: 2px; }
.panel-title {
  position: relative;
  display: flex;
  align-items: center;
  justify-content: center;
  gap: 4px;
  height: 11px;
  background: linear-gradient(#4f4f4f, #464646);
  line-height: 10px;
}
.launch { position: absolute; top: 0; right: 1px; font-size: 8px; }
.p-view .panel-title { padding-right: 8px; gap: 3px; }
.p-draw { width: 121px; }
.p-modify { width: 133px; }
.p-annotation { width: 100px; }
.p-layers { width: 147px; }
.p-block { width: 85px; }
.p-properties { width: 141px; }
.p-groups { width: 38px; }
.p-utilities { width: 51px; }
.p-clipboard { width: 43px; }
.p-view { width: 32px; }

.big {
  display: flex;
  flex: none;
  flex-direction: column;
  align-items: center;
  width: 23px;
  padding-top: 1px;
}
.big svg { width: 18px; height: 18px; margin-bottom: 2px; }
.big .caret { margin-top: 2px; }
.big.wide { width: 29px; }
.big.dimension { width: 34px; }
.big.props { width: 33px; }
.p-block .big { width: 20px; }
.p-utilities .big { width: 36px; }
.p-clipboard .big { width: 28px; }
.p-view .big { width: 30px; }

.col { display: flex; flex-direction: column; }
.col.grow { flex: 1; min-width: 0; }
.tool {
  display: flex;
  align-items: center;
  gap: 3px;
  height: 13px;
  padding: 0 2px;
}
.tool.on { background: #4678b8; }
.tool .caret { margin-left: 2px; }
.tool .caret.end { margin-left: auto; }
.p-modify .panel-body { padding-left: 1px; }
.c1 { width: 38px; }
.c2 { width: 36px; }
.c3 { width: 44px; padding-right: 7px; }
.p-annotation .col { width: 39px; }
.p-block .col { padding: 0 3px; }
.tool-row { display: flex; }
.grow > .combo { margin: 0 1px 1px 0; }
.prop { display: flex; align-items: center; gap: 2px; height: 13px; }
.prop .combo { flex: 1; min-width: 0; }
.p-properties .swatch { margin: 0 3px; }
.rule { flex: none; width: 31px; height: 1px; background: #c8c8c8; }
.rule + select { padding: 0; margin-left: -2px; }

/* Drawing file tabs */
.files {
  display: flex;
  flex: none;
  align-items: flex-end;
  height: 15px;
  padding-left: 11px;
  border-bottom: 2px solid #5e5e5e;
  background: #373737;
  color: #b5b5b5;
}
.file {
  display: flex;
  justify-content: space-between;
  width: 66px;
  padding: 0 5px;
  background: linear-gradient(#505050, #474747);
  clip-path: polygon(0 100%, 4px 8%, 6px 0, calc(100% - 6px) 0, calc(100% - 3px) 10%, 100% 100%);
  line-height: 12px;
}
.file.active { background: linear-gradient(#8c8c8c, #626262); color: #fff; }
.file .x { padding-right: 2px; color: #333; }
.file.add { justify-content: center; width: 17px; background: #505050; font-size: 8px; }

/* Drawing area */
.viewport {
  position: relative;
  flex: 1;
  min-height: 0;
  overflow: hidden;
  background: #212830;
}
.drawing { width: 100%; height: 100%; }
.drawing-text { fill: #fff; font-family: "Liberation Sans", Arial, sans-serif; }
.viewport-label { position: absolute; top: 4px; left: 2px; color: #e0e0e0; }
.viewport-buttons { position: absolute; top: 5px; right: 10px; display: flex; gap: 5px; }
.viewport-buttons svg { width: 6px; height: 6px; }
.cube { position: absolute; top: 20px; right: 13px; width: 72px; height: 74px; }
.cube text { font-family: "Liberation Sans", Arial, sans-serif; font-weight: bold; text-anchor: middle; }
.cube-face { fill: #3c4147; font-size: 6px; }
.cube-dir { fill: #b9bbbd; font-size: 11px; }
.wcs {
  position: absolute;
  top: 104px;
  right: 36px;
  width: 25px;
  height: 9px;
  border-radius: 2px;
  background: #9ea4ae;
  color: #4b5058;
}
.navbar {
  position: absolute;
  top: 126px;
  right: 6px;
  border-radius: 2px;
  background: #60656b;
}
.navbar svg { width: 18px; height: 113px; }
.edge { position: absolute; inset: 2px 1px 0 auto; width: 3px; background: #a9cbee; }

/* Command line */
.command {
  display: flex;
  flex: none;
  height: 40px;
  border-top: 1px solid #707070;
  background: #c6c6c6;
}
.command-grip { width: 12px; background: linear-gradient(90deg, #606060, #444); }
.command-grip svg { width: 12px; height: 40px; }
.command-main { display: flex; flex: 1; flex-direction: column; }
.history {
  flex: 1;
  margin: 0;
  padding: 0 1px;
  color: #1c1c1c;
  font: 6px/8px "DejaVu Sans Mono", monospace;
}
.prompt {
  display: flex;
  align-items: center;
  gap: 3px;
  height: 13px;
  padding-left: 3px;
  border-top: 1px solid #8f8f8f;
  border-bottom: 1px solid #b0b0b0;
  background: #fff;
}
.prompt svg { width: 14px; height: 8px; }
.prompt input { flex: 1; color: #333; font: italic 6px/8px "DejaVu Sans Mono", monospace; }
.prompt input::placeholder { color: #999; opacity: 1; }

/* Status bar */
.status {
  display: flex;
  flex: none;
  justify-content: space-between;
  height: 15px;
  background: #373737;
}
.layouts { display: flex; gap: 1px; align-items: flex-start; padding-left: 6px; color: #c4c4c4; }
.layouts button {
  width: 34px;
  height: 9px;
  background: #5a5a5a;
  clip-path: polygon(0 0, 100% 0, calc(100% - 4px) 100%, 4px 100%);
}
.layouts .active { width: 31px; background: #8a8a8a; color: #fff; font-weight: bold; }
.layouts .add { width: 15px; }
.status-tools { display: flex; align-items: center; padding-right: 1px; }
.status-tools button {
  display: flex;
  align-items: center;
  justify-content: center;
  width: 13px;
  height: 13px;
  background: #4c4c4c;
  color: #c8c8c8;
}
.status-tools .model { width: 26px; border: 1px solid #606060; color: #fff; font-weight: bold; }
.status-tools .drop { width: 8px; }
.status-tools .sep { border-left: 1px solid #373737; }
.status-tools .roomy { width: 14px; }
.status-tools .blue { color: #2f8cf0; }
.status-tools .scale { gap: 2px; width: 20px; }
.status-tools .disc { width: 10px; height: 10px; }

/* Windows taskbar */
.taskbar { display: flex; flex: none; height: 21px; background: #05090f; }
.taskbar button { display: flex; align-items: center; justify-content: center; }
.start { width: 26px; }
.start svg { width: 10px; height: 10px; }
.search {
  display: flex;
  align-items: center;
  gap: 5px;
  width: 183px;
  padding: 0 6px 0 5px;
  background: #303132;
  font: 8px/10px Lato, "Open Sans", sans-serif;
}
.cortana { width: 11px; height: 11px; border: 2px solid #eee; border-radius: 50%; }
.search input { flex: 1; min-width: 0; }
.search input::placeholder { color: #bdbdbd; opacity: 1; }
.task { width: 26px; border: solid transparent; border-width: 2px 0; }
.task .logo { width: 13px; height: 13px; }
.running { border-bottom-color: #e89aa6; }
.current { background: #3d4148; }
.tray { display: flex; gap: 3px; margin-left: auto; }
.tray button { width: 10px; }
.tray .people { width: 14px; margin-right: 4px; }
.clock { display: flex; flex-direction: column; justify-content: center; width: 34px; color: #fff; text-align: center; line-height: 9px; }
.tray .notify { position: relative; width: 25px; margin-right: 2px; }
.notify svg { width: 12px; height: 12px; }
.badge {
  position: absolute;
  right: 4px;
  bottom: 3px;
  width: 8px;
  height: 8px;
  border: 1px solid #bbb;
  border-radius: 50%;
  background: #444;
  line-height: 6px;
}
```
